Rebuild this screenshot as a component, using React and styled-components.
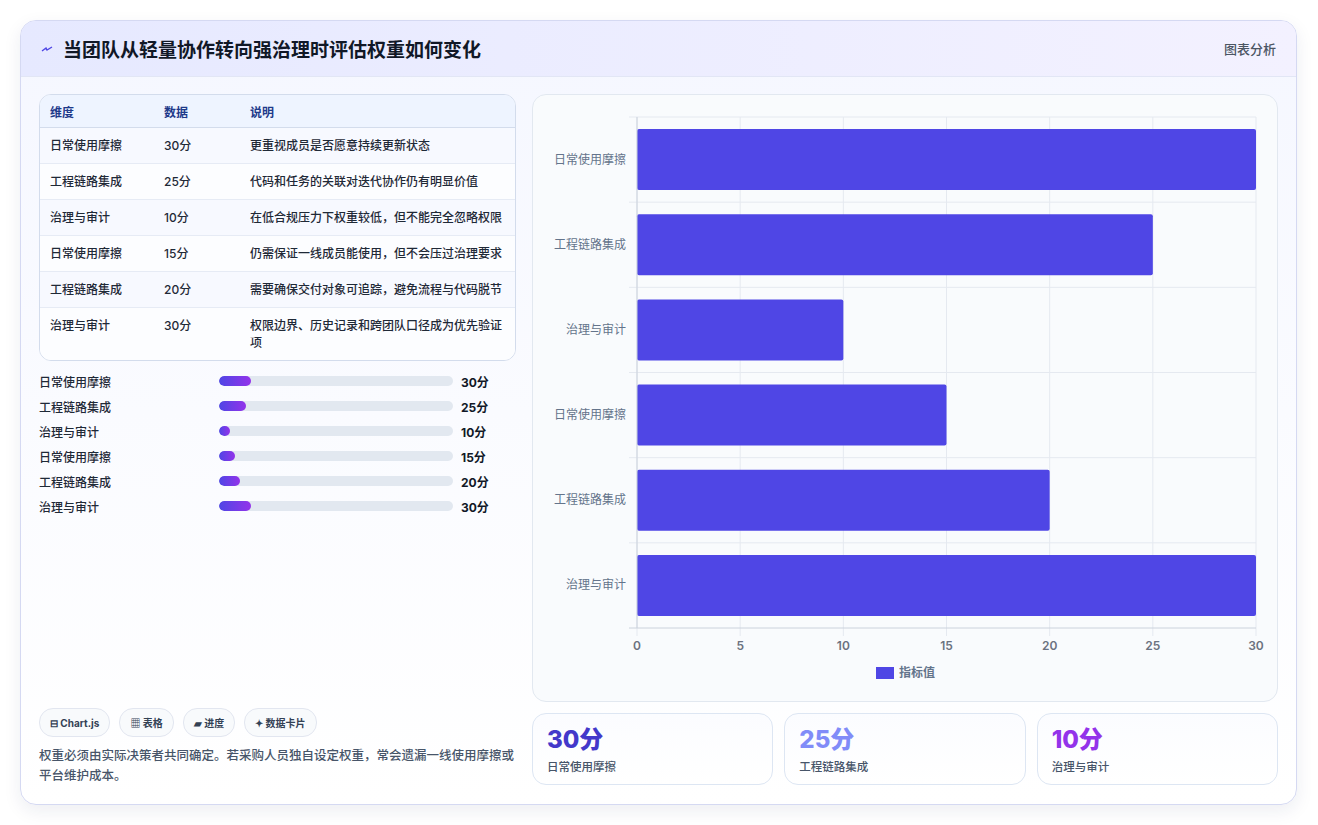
import React from 'react'
import styled, { createGlobalStyle } from 'styled-components'

const Global = createGlobalStyle`
  html, body { margin: 0; background: #f3f4f6; }
  body { font-family: Inter, "Noto Sans CJK SC", sans-serif; color: #1e293b; }
`;

const Page = styled.div`
  width: 1318px;
  height: 825px;
  box-sizing: border-box;
  padding: 20px 21px 22px 20px;
  background: #fff;
`;

const Card = styled.div`
  height: 100%;
  border: 1px solid #d5d9f2;
  border-radius: 16px;
  background: linear-gradient(180deg, #f5f7ff 0%, #ffffff 100%);
  box-shadow: 0 6px 18px rgba(30, 41, 90, 0.08);
  overflow: hidden;
  display: flex;
  flex-direction: column;
`;

const Header = styled.div`
  height: 55px;
  flex: none;
  display: flex;
  align-items: center;
  justify-content: space-between;
  padding: 0 20px;
  background: linear-gradient(90deg, #e6e9ff 0%, #f3f1ff 100%);
  border-bottom: 1px solid #e2e6f5;
`;

const Title = styled.h1`
  margin: 0;
  font-size: 19px;
  font-weight: 700;
  color: #111827;
  display: flex;
  align-items: center;
  gap: 10px;
`;

const Tag = styled.span`
  font-size: 13px;
  color: #4b5563;
  font-weight: 500;
`;

const Body = styled.div`
  flex: 1;
  display: grid;
  grid-template-columns: 477px 746px;
  gap: 16px;
  padding: 17px 18px 18px 18px;
`;

const Left = styled.div`
  display: flex;
  flex-direction: column;
`;

const Table = styled.table`
  width: 100%;
  border-collapse: separate;
  border-spacing: 0;
  border: 1px solid #d3dcec;
  border-radius: 12px;
  overflow: hidden;
  font-size: 12px;
  background: #fff;
`;

const Th = styled.th`
  text-align: left;
  font-weight: 600;
  color: #1e3a8a;
  background: #eef4ff;
  height: 32px;
  padding: 0 10px;
  border-bottom: 1px solid #d3dcec;
  width: ${p => p.w || 'auto'};
`;

const Td = styled.td`
  padding: 9px 10px;
  line-height: 17px;
  color: #1f2937;
  font-weight: 500;
  vertical-align: top;
  background: ${p => (p.odd ? '#f7f9ff' : '#fcfdff')};
  border-top: ${p => (p.first ? 'none' : '1px solid #e6ebf5')};
`;

const Bars = styled.div`
  margin-top: 11px;
  display: flex;
  flex-direction: column;
  gap: 7px;
`;

const BarRow = styled.div`
  display: grid;
  grid-template-columns: 172px 234px 1fr;
  gap: 8px;
  align-items: center;
  font-size: 12px;
  height: 18px;
`;

const BarLabel = styled.span`
  color: #1f2937;
  font-weight: 500;
`;

const Track = styled.div`
  height: 10px;
  border-radius: 5px;
  background: #e2e8f0;
  overflow: hidden;
`;

const Fill = styled.div`
  height: 100%;
  border-radius: 5px;
  background: linear-gradient(90deg, #4f46e5, #9333ea);
`;

const BarValue = styled.span`
  font-weight: 700;
  color: #111827;
`;

const Footer = styled.div`
  margin-top: auto;
`;

const Chips = styled.div`
  display: flex;
  gap: 9px;
`;

const Chip = styled.span`
  height: 27px;
  padding: 0 10px;
  display: inline-flex;
  align-items: center;
  gap: 4px;
  border: 1px solid #e2e6f0;
  border-radius: 14px;
  background: #f8fafc;
  font-size: 10px;
  font-weight: 700;
  color: #334155;
`;

const Note = styled.p`
  margin: 9px 0 0;
  font-size: 12.5px;
  line-height: 20px;
  color: #475569;
  font-weight: 500;
`;

const Right = styled.div`
  display: flex;
  flex-direction: column;
  gap: 11px;
`;

const ChartCard = styled.div`
  height: 606px;
  border: 1px solid #e2e8f0;
  border-radius: 14px;
  background: #f9fbfd;
  overflow: hidden;
`;

const Stats = styled.div`
  display: grid;
  grid-template-columns: repeat(3, 1fr);
  gap: 11px;
`;

const Stat = styled.div`
  height: 72px;
  box-sizing: border-box;
  border: 1px solid #dde6f3;
  border-radius: 14px;
  background: linear-gradient(180deg, #fbfcff, #ffffff);
  padding: 11px 14px;
`;

const StatValue = styled.div`
  font-size: 24px;
  font-weight: 800;
  line-height: 30px;
  color: ${p => p.color};
`;

const StatLabel = styled.div`
  font-size: 11.5px;
  color: #475569;
  font-weight: 500;
  margin-top: 3px;
`;

const rows = [
  ['日常使用摩擦', 30, '更重视成员是否愿意持续更新状态'],
  ['工程链路集成', 25, '代码和任务的关联对迭代协作仍有明显价值'],
  ['治理与审计', 10, '在低合规压力下权重较低，但不能完全忽略权限'],
  ['日常使用摩擦', 15, '仍需保证一线成员能使用，但不会压过治理要求'],
  ['工程链路集成', 20, '需要确保交付对象可追踪，避免流程与代码脱节'],
  ['治理与审计', 30, '权限边界、历史记录和跨团队口径成为优先验证项'],
];

function Chart() {
  const x0 = 104, x1 = 723, y0 = 22, y1 = 533;
  const step = (y1 - y0) / 6;
  const sx = v => x0 + ((x1 - x0) * v) / 30;
  return (
    <svg width="746" height="606" viewBox="0 0 746 606">
      {[0, 5, 10, 15, 20, 25, 30].map(t => (
        <g key={t}>
          <line x1={sx(t)} x2={sx(t)} y1={y0} y2={y1 + 8} stroke="#e5e9f0" />
          <text x={sx(t)} y={555} fontSize="12" fill="#6b7280" textAnchor="middle" fontWeight="600">{t}</text>
        </g>
      ))}
      {rows.map((r, i) => {
        const cy = y0 + step * i + step / 2;
        return (
          <g key={i}>
            <line x1={x0 - 8} x2={x1} y1={y0 + step * i} y2={y0 + step * i} stroke="#e5e9f0" />
            <text x={x0 - 11} y={cy + 4} fontSize="12" fill="#64748b" textAnchor="end">{r[0]}</text>
            <rect x={x0} y={cy - 30.5} width={sx(r[1]) - x0} height="61" rx="2" fill="#4f46e5" />
          </g>
        );
      })}
      <line x1={x0 - 8} x2={x1} y1={y1} y2={y1} stroke="#cbd2dc" />
      <line x1={x0} x2={x0} y1={y0} y2={y1} stroke="#cbd2dc" />
      <rect x="343" y="572" width="18" height="12" fill="#4f46e5" />
      <text x="366" y="582" fontSize="12" fill="#64748b" fontWeight="600">指标值</text>
    </svg>
  );
}

export default function App() {
  return (
    <>
      <Global />
      <Page>
        <Card>
          <Header>
            <Title>
              <svg width="12" height="10" viewBox="0 0 12 10">
                <path d="M1 7 L5 4 L6 6 L11 3" stroke="#4f46e5" strokeWidth="1.4" fill="none" />
              </svg>
              当团队从轻量协作转向强治理时评估权重如何变化
            </Title>
            <Tag>图表分析</Tag>
          </Header>
          <Body>
            <Left>
              <Table>
                <thead>
                  <tr>
                    <Th w="94px">维度</Th>
                    <Th w="66px">数据</Th>
                    <Th>说明</Th>
                  </tr>
                </thead>
                <tbody>
                  {rows.map((r, i) => (
                    <tr key={i}>
                      <Td first={i === 0} odd={i % 2 === 0}>{r[0]}</Td>
                      <Td first={i === 0} odd={i % 2 === 0}>{r[1]}分</Td>
                      <Td first={i === 0} odd={i % 2 === 0}>{r[2]}</Td>
                    </tr>
                  ))}
                </tbody>
              </Table>
              <Bars>
                {rows.map((r, i) => (
                  <BarRow key={i}>
                    <BarLabel>{r[0]}</BarLabel>
                    <Track>
                      <Fill style={{ width: `${(r[1] / 220) * 100}%` }} />
                    </Track>
                    <BarValue>{r[1]}分</BarValue>
                  </BarRow>
                ))}
              </Bars>
              <Footer>
                <Chips>
                  <Chip>⊟ Chart.js</Chip>
                  <Chip>▦ 表格</Chip>
                  <Chip>▰ 进度</Chip>
                  <Chip>✦ 数据卡片</Chip>
                </Chips>
                <Note>权重必须由实际决策者共同确定。若采购人员独自设定权重，常会遗漏一线使用摩擦或平台维护成本。</Note>
              </Footer>
            </Left>
            <Right>
              <ChartCard>
                <Chart />
              </ChartCard>
              <Stats>
                <Stat><StatValue color="#4338ca">30分</StatValue><StatLabel>日常使用摩擦</StatLabel></Stat>
                <Stat><StatValue color="#818cf8">25分</StatValue><StatLabel>工程链路集成</StatLabel></Stat>
                <Stat><StatValue color="#9333ea">10分</StatValue><StatLabel>治理与审计</StatLabel></Stat>
              </Stats>
            </Right>
          </Body>
        </Card>
      </Page>
    </>
  );
}
